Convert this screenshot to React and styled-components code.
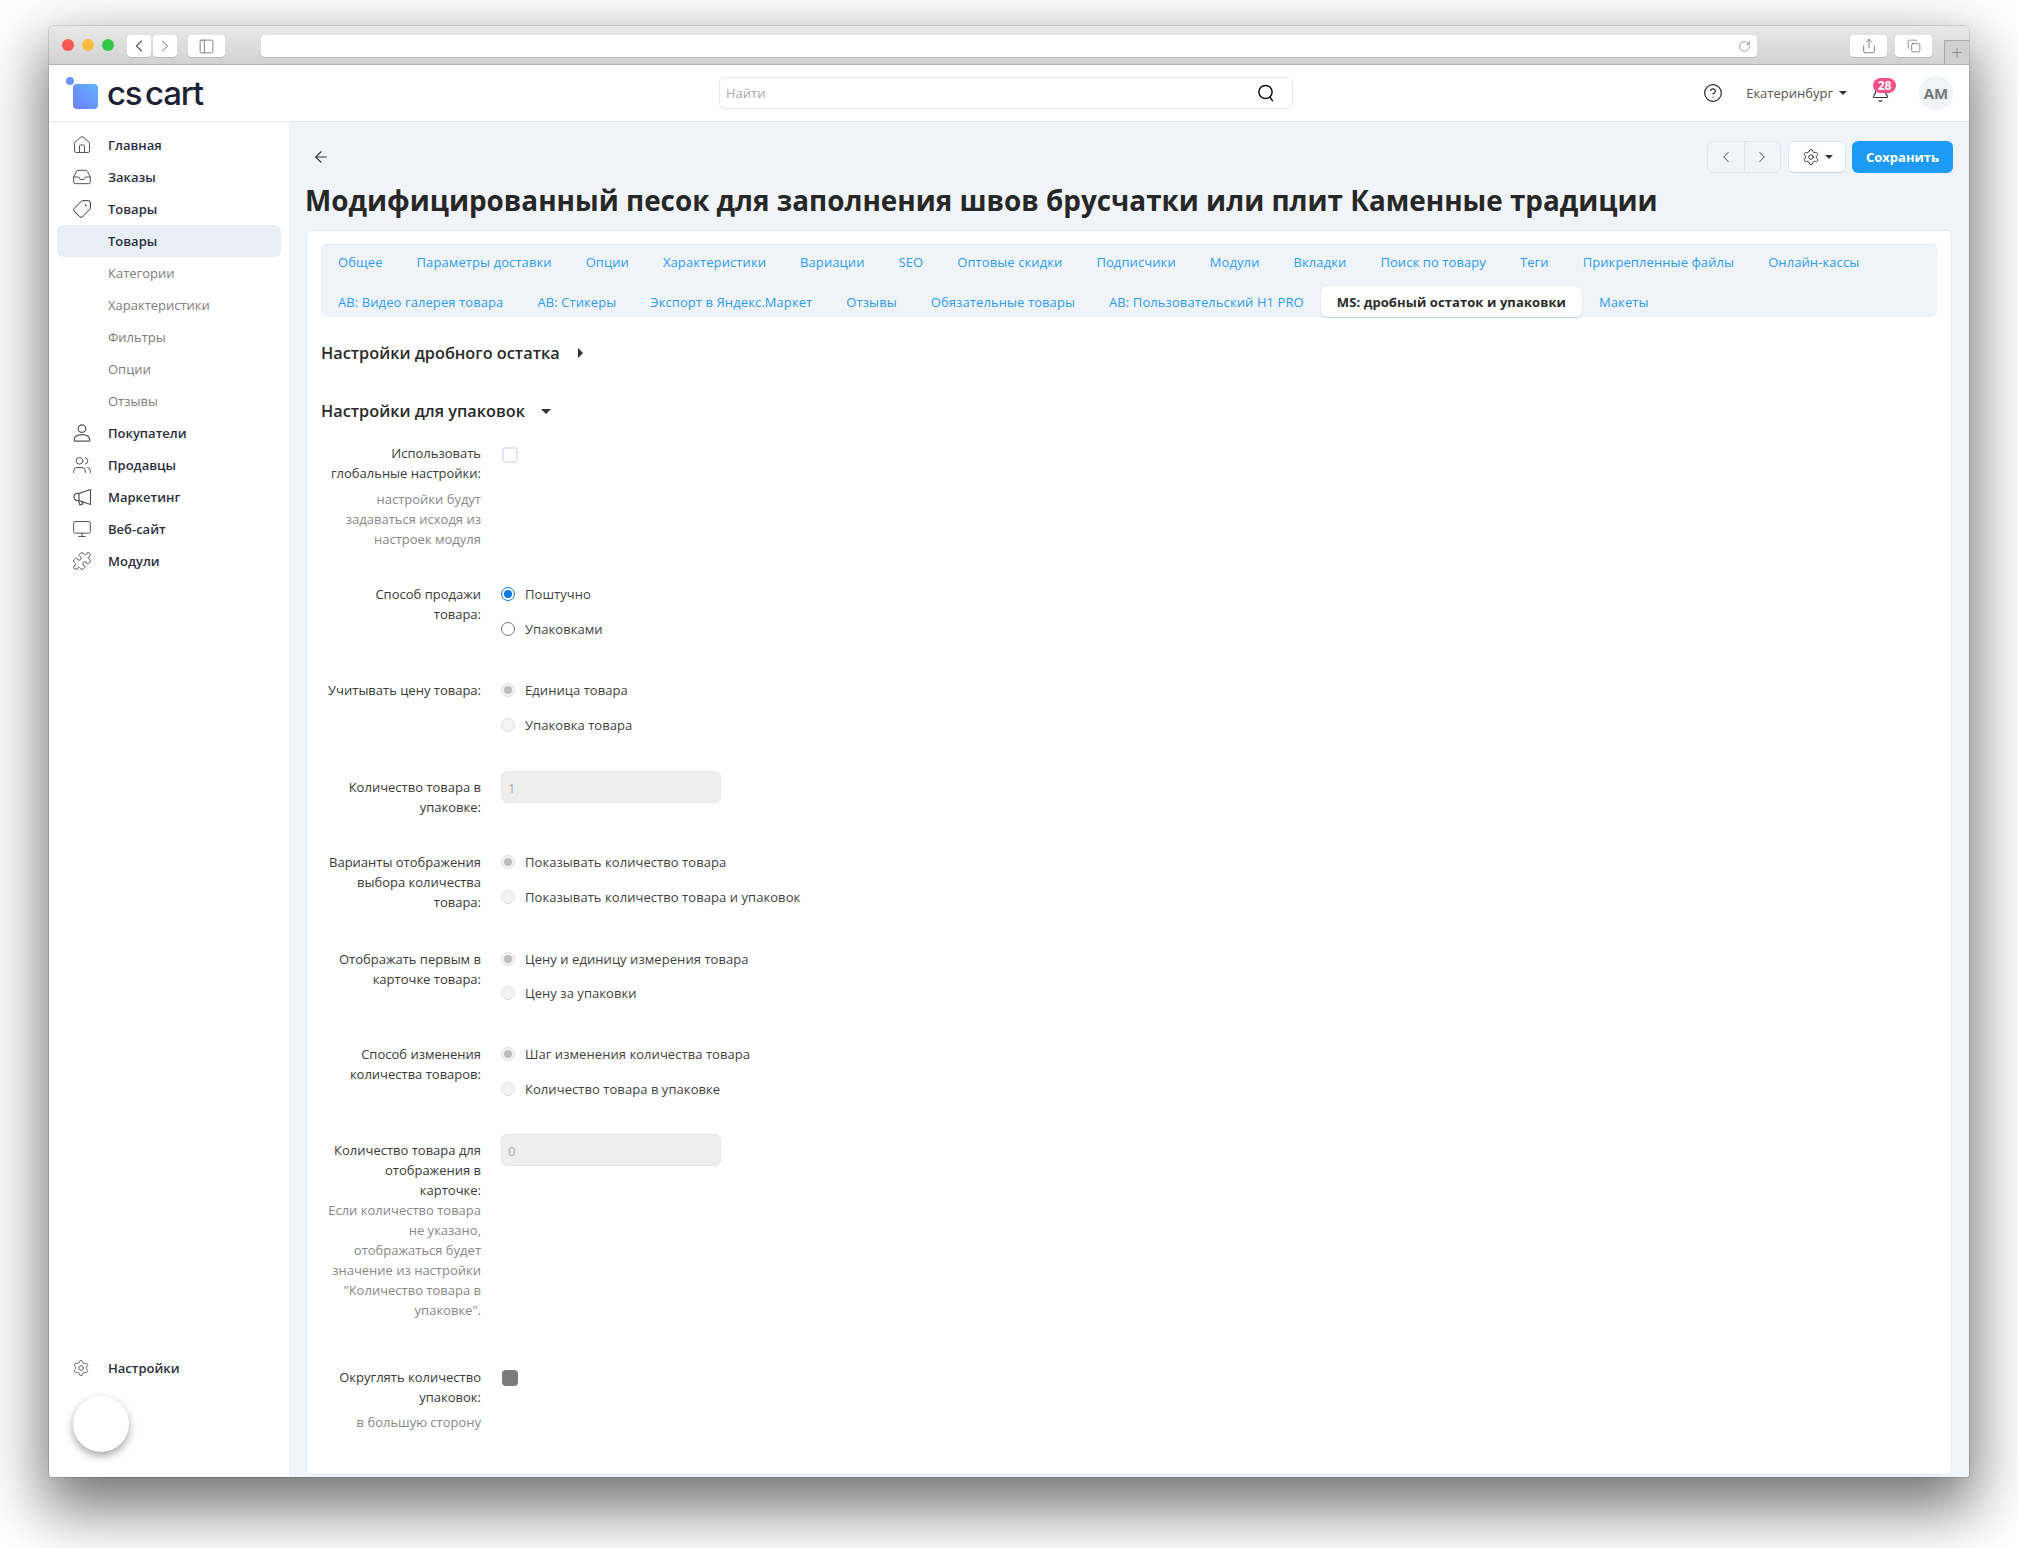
import styled, { createGlobalStyle } from 'styled-components';
import {
  ArrowLeft, Bell, ChevronLeft, ChevronRight, CircleHelp, Copy, Home, Inbox, Monitor,
  PanelLeft, Puzzle, RotateCw, Settings, Share, Tag, Users,
} from 'lucide-react';

const GlobalStyle = createGlobalStyle`
  html, body { margin: 0; padding: 0; background: #fff; }
  body { width: 2018px; height: 1548px; overflow: hidden; font-family: "Open Sans", "Liberation Sans", sans-serif; font-size: 13px; color: #333; }
  * { box-sizing: border-box; }
`;

const Desk = styled.div`padding: 26px 49px 0 49px;`;

const Browser = styled.div`
  width: 1920px; height: 1451px; display: flex; flex-direction: column;
  background: #fff; border-radius: 5px 5px 3px 3px; overflow: hidden;
  box-shadow: 0 26px 60px 6px rgba(0,0,0,.55), 0 0 0 1px rgba(0,0,0,.12);
`;

const TitleBar = styled.div`
  height: 39px; flex: none; display: flex; align-items: flex-start; padding: 9px 0 0 13px;
  background: linear-gradient(#e9e9e9, #d1d1d1); border-bottom: 1px solid #b4b4b4;
  position: relative;
`;

const Light = styled.span`
  width: 12px; height: 12px; border-radius: 50%; background: ${({ $color }) => $color};
  margin: 4px 8px 0 0; flex: none;
`;

const ChromeBtn = styled.div`
  width: ${({ $w }) => $w}px; height: 22px; margin-left: ${({ $ml }) => $ml}px; flex: none;
  background: #fff; border-radius: 4px; box-shadow: 0 1px 0 #bbb;
  display: flex; align-items: center; justify-content: center; color: ${({ $color }) => $color || '#555'};
`;

const UrlBar = styled.div`
  width: 1496px; height: 22px; margin-left: 36px; flex: none; background: #fff; border-radius: 4px;
  box-shadow: 0 1px 0 #bbb; display: flex; align-items: center; justify-content: flex-end; padding-right: 6px; color: #777;
`;

const NewTab = styled.div`
  position: absolute; right: 0; bottom: 0; width: 25px; height: 24px;
  border: 1px solid #aaa; border-right: 0; border-bottom: 0; display: flex; align-items: center; justify-content: center;
  background: #cfcfcf; color: #8a8a8a; font-size: 20px; font-weight: 300; line-height: 1;
`;

const Header = styled.header`
  height: 57px; flex: none; display: flex; align-items: center; border-bottom: 1px solid #e3e8f1; background: #fff;
  padding: 0 16px 0 14px;
`;

const Logo = styled.div`
  width: 656px; flex: none; display: flex; align-items: center; height: 100%;
`;

const LogoMark = styled.div`
  position: relative; width: 25px; height: 25px; margin: 6px 0 0 10px; border-radius: 4px;
  background: linear-gradient(45deg, #6f7dff, #5fb4f7);
  &::before {
    content: ''; position: absolute; left: -7px; top: -7px; width: 8px; height: 8px; border-radius: 50%; background: #6f93ff;
  }
`;

const LogoText = styled.div`
  margin: 0 0 0 9px; font-family: Inter, sans-serif; font-size: 33px; font-weight: 500; color: #1c2135;
  letter-spacing: -1.2px; word-spacing: -4px; line-height: 1;
`;

const SearchBox = styled.div`
  width: 574px; height: 32px; display: flex; align-items: center; justify-content: space-between;
  border: 1px solid #e2e6f2; border-radius: 6px; padding: 0 17px 0 6px; color: #aaa; flex: none;
`;

const HeaderRight = styled.div`
  margin-left: auto; display: flex; align-items: center; color: #555;
`;

const City = styled.div`
  margin-left: 23px; display: flex; align-items: center; gap: 6px; color: #555; font-size: 13px;
`;

const Caret = styled.span`
  width: 0; height: 0; border-left: 4px solid transparent; border-right: 4px solid transparent;
  border-top: 4px solid ${({ $color }) => $color || '#333'};
`;

const BellWrap = styled.div`
  position: relative; margin-left: 21px; width: 24px; height: 24px; color: #333; display: flex; align-items: center; justify-content: center;
`;

const Badge = styled.span`
  position: absolute; top: -3px; left: 5px; width: 23px; height: 15px; border-radius: 8px; background: #f5508a;
  color: #fff; font-size: 12px; font-weight: 700; line-height: 15px; text-align: center;
`;

const Avatar = styled.div`
  width: 34px; height: 34px; margin-left: 27px; border-radius: 50%; background: #f0f3f8; color: #777;
  font-size: 15px; font-weight: 700; display: flex; align-items: center; justify-content: center;
`;

const Body = styled.div`flex: 1; display: flex; min-height: 0;`;

const Sidebar = styled.aside`
  width: 240px; flex: none; display: flex; flex-direction: column; padding: 7px 8px 25px; background: #fff;
`;

const NavItem = styled.div`
  height: 32px; flex: none; display: flex; align-items: center; padding-left: 15px; border-radius: 6px;
  font-weight: ${({ $sub, $active }) => ($sub && !$active ? 400 : 600)};
  color: ${({ $sub, $active }) => ($sub && !$active ? '#7d7d7d' : '#2a2f3d')};
  background: ${({ $active }) => ($active ? '#e9eff7' : 'transparent')};
  margin-top: ${({ $push }) => ($push ? 'auto' : '0')};
`;

const NavIcon = styled.span`
  width: 36px; flex: none; display: flex; align-items: center; color: #555;
`;

const Fab = styled.div`
  width: 56px; height: 56px; margin: 12px 0 0 16px; border-radius: 50%; background: #fff; flex: none;
  box-shadow: 0 4px 8px rgba(0,0,0,.35);
`;

const Main = styled.main`
  flex: 1; min-width: 0; background: #f0f3f8; padding: 19px 17px 2px; display: flex; flex-direction: column;
`;

const ActionRow = styled.div`
  height: 32px; display: flex; align-items: center; flex: none; margin-right: -1px;
`;

const BackBtn = styled.div`
  width: 30px; margin-left: 6px; color: #333; display: flex; align-items: center;
`;

const Pager = styled.div`
  margin-left: auto; display: flex; width: 74px; height: 32px; border: 1px solid #dde5f0; border-radius: 6px; color: #666;
`;

const PagerBtn = styled.div`
  flex: 1; display: flex; align-items: center; justify-content: center;
  & + & { border-left: 1px solid #dde5f0; }
`;

const GearBtn = styled.div`
  width: 58px; height: 32px; margin-left: 7px; background: #fff; border: 1px solid #dde5f0; border-bottom-color: #c9d6ea; border-radius: 6px;
  display: flex; align-items: center; justify-content: center; gap: 5px; color: #333;
`;

const SaveBtn = styled.div`
  width: 101px; height: 32px; margin-left: 6px; border-radius: 6px; background: #1e9bf7; color: #fff; font-weight: 700;
  display: flex; align-items: center; justify-content: center;
`;

const Title = styled.h1`
  margin: 8px 0 11px -1px; font-size: 27.85px; line-height: 38px; font-weight: 700; color: #272727; white-space: nowrap;
`;

const Card = styled.section`
  flex: 1; min-height: 0; background: #fff; border: 1px solid #e5eaf3; border-radius: 6px; padding: 14px 14px 0;
`;

const TabBox = styled.nav`
  display: flex; flex-wrap: wrap; row-gap: 9px; height: 72px; padding: 1px 0 0; background: #f0f3f8; border-radius: 6px;
  box-shadow: 0 -1px 1px #e3e6ec;
`;

const TabItem = styled.div`
  height: 31px; display: flex; align-items: center; padding: 0 ${({ $active }) => ($active ? 16 : 17)}px; white-space: nowrap; border-radius: 6px;
  letter-spacing: 0.09px;
  color: ${({ $active }) => ($active ? '#2b2b2b' : '#2d9cf5')};
  font-weight: ${({ $active }) => ($active ? 700 : 400)};
  background: ${({ $active }) => ($active ? '#fff' : 'transparent')};
  box-shadow: ${({ $active }) => ($active ? '0 1px 1px #bccbe6, 0 0 1px #cdd6e8' : 'none')};
`;

const SectionHead = styled.h3`
  margin: ${({ $top }) => $top}px 0 0; height: 24px; display: flex; align-items: center; gap: ${({ $gap }) => $gap}px;
  font-size: 16.3px; font-weight: 600; color: #2a2a2a;
`;

const CaretRight = styled.span`
  width: 0; height: 0; border-top: 5px solid transparent; border-bottom: 5px solid transparent; border-left: 5px solid #333;
`;

const CaretDown = styled.span`
  width: 0; height: 0; border-left: 5px solid transparent; border-right: 5px solid transparent; border-top: 5px solid #333;
`;

const Form = styled.div`margin-top: 20px;`;

const Row = styled.div`
  display: grid; grid-template-columns: 160px 1fr; column-gap: 20px; margin-bottom: ${({ $after }) => $after}px;
`;

const LabelCol = styled.div`text-align: right; padding-left: 5px;`;

const Label = styled.div`line-height: 20px; color: #3a3a3a;`;

const Hint = styled.div`
  line-height: 20px; color: #888; margin-top: ${({ $mt }) => $mt || 0}px;
`;

const RadioRow = styled.div`
  display: flex; align-items: center; height: 20px; margin-bottom: ${({ $mb }) => $mb}px; color: #3f3f3f; letter-spacing: 0.06px;
`;

const RadioDot = styled.span`
  width: 14px; height: 14px; border-radius: 50%; margin-right: 10px; flex: none; position: relative;
  border: 1px solid ${({ $on, $off }) => ($off ? '#dedede' : $on ? '#0a7bdf' : '#777')};
  background: ${({ $off }) => ($off ? '#f3f3f3' : '#fff')};
  &::after {
    content: ''; display: ${({ $on }) => ($on ? 'block' : 'none')}; position: absolute; left: 2px; top: 2px; width: 8px; height: 8px; border-radius: 50%;
    background: ${({ $off }) => ($off ? '#bdbdbd' : '#0a7bdf')};
  }
`;

const Check = styled.span`
  display: block; width: 16px; height: 16px; margin: ${({ $mt }) => $mt}px 0 0 1px; border-radius: 4px;
  border: 2px solid ${({ $filled }) => ($filled ? '#7b7b7b' : '#e1e6f0')};
  background: ${({ $filled }) => ($filled ? '#7b7b7b' : '#fff')};
`;

const Disabled = styled.div`
  width: 220px; height: 32px; margin-top: -6px; background: #eeeeee; border: 1px solid #e1e6f0; border-radius: 6px;
  padding: 0 6px; line-height: 32px; color: #aaa;
`;

const tabs = [
  'Общее', 'Параметры доставки', 'Опции', 'Характеристики', 'Вариации', 'SEO', 'Оптовые скидки', 'Подписчики',
  'Модули', 'Вкладки', 'Поиск по товару', 'Теги', 'Прикрепленные файлы', 'Онлайн-кассы', 'AB: Видео галерея товара',
  'AB: Стикеры', 'Экспорт в Яндекс.Маркет', 'Отзывы', 'Обязательные товары', 'AB: Пользовательский H1 PRO',
  'MS: дробный остаток и упаковки', 'Макеты',
];

function UserIcon() {
  return (
    <svg width="20" height="20" viewBox="0 0 20 20" fill="none" stroke="currentColor" strokeWidth="1.2">
      <circle cx="10" cy="5.6" r="3.8" />
      <path d="M2.2 17.2c0-3.6 3-5.6 7.8-5.6s7.8 2 7.8 5.6c0 .7-.4 1-1 1H3.2c-.6 0-1-.3-1-1z" />
    </svg>
  );
}

function HornIcon() {
  return (
    <svg width="20" height="20" viewBox="0 0 20 20" fill="none" stroke="currentColor" strokeWidth="1.2" strokeLinejoin="round">
      <path d="M18.5 2.5v15L7 13.6H5.6a3.6 3.6 0 0 1 0-7.2H7z" />
      <path d="M7 6.4v7.2M6.6 13.7l1.2 4.1 3.1-.9-1-2.2" />
    </svg>
  );
}

function TagIcon(props) {
  return <Tag {...props} style={{ transform: 'rotate(90deg)' }} color="#333" />;
}

const nav = [
  { label: 'Главная', icon: Home },
  { label: 'Заказы', icon: Inbox },
  { label: 'Товары', icon: TagIcon },
  { label: 'Товары', sub: true, active: true },
  { label: 'Категории', sub: true },
  { label: 'Характеристики', sub: true },
  { label: 'Фильтры', sub: true },
  { label: 'Опции', sub: true },
  { label: 'Отзывы', sub: true },
  { label: 'Покупатели', icon: UserIcon },
  { label: 'Продавцы', icon: Users },
  { label: 'Маркетинг', icon: HornIcon },
  { label: 'Веб-сайт', icon: Monitor },
  { label: 'Модули', icon: Puzzle },
];

function Radios({ items, pitch = 15 }) {
  return (
    <div>
      {items.map((it, i) => (
        <RadioRow key={it.text} $mb={i === items.length - 1 ? 6 : pitch}>
          <RadioDot $on={it.on} $off={it.off} />
          {it.text}
        </RadioRow>
      ))}
    </div>
  );
}

function SearchGlyph() {
  return (
    <svg width="18" height="18" viewBox="0 0 18 18" fill="none" stroke="#111" strokeWidth="1.5">
      <circle cx="8.5" cy="8" r="6.6" />
      <path d="M12.8 13l2.6 3.6" strokeLinecap="round" />
    </svg>
  );
}

export default function App() {
  return (
    <Desk>
      <GlobalStyle />
      <Browser>
        <TitleBar>
          <Light $color="#fc5753" />
          <Light $color="#fdbc40" />
          <Light $color="#33c748" />
          <ChromeBtn $w={24} $ml={5}><ChevronLeft size={20} strokeWidth={1.3} /></ChromeBtn>
          <ChromeBtn $w={24} $ml={2} $color="#aaa"><ChevronRight size={20} strokeWidth={1.3} /></ChromeBtn>
          <ChromeBtn $w={37} $ml={11}><PanelLeft size={17} strokeWidth={1} /></ChromeBtn>
          <UrlBar><RotateCw size={13} strokeWidth={1.3} /></UrlBar>
          <ChromeBtn $w={37} $ml={93}><Share size={16} strokeWidth={1.1} /></ChromeBtn>
          <ChromeBtn $w={37} $ml={8}><Copy size={14} strokeWidth={1.1} /></ChromeBtn>
          <NewTab>+</NewTab>
        </TitleBar>
        <Header>
          <Logo>
            <LogoMark />
            <LogoText>cs cart</LogoText>
          </Logo>
          <SearchBox>
            Найти
            <SearchGlyph />
          </SearchBox>
          <HeaderRight>
            <CircleHelp size={20} strokeWidth={1.4} color="#222" />
            <City>Екатеринбург <Caret /></City>
            <BellWrap>
              <Bell size={19} strokeWidth={1.4} />
              <Badge>28</Badge>
            </BellWrap>
            <Avatar>АМ</Avatar>
          </HeaderRight>
        </Header>
        <Body>
          <Sidebar>
            {nav.map((n, i) => (
              <NavItem key={n.label + i} $sub={n.sub} $active={n.active}>
                <NavIcon>
                  {n.icon && <n.icon size={20} strokeWidth={1.2} />}
                </NavIcon>
                {n.label}
              </NavItem>
            ))}
            <NavItem $push>
              <NavIcon><Settings size={18} strokeWidth={1.2} /></NavIcon>
              Настройки
            </NavItem>
            <Fab />
          </Sidebar>
          <Main>
            <ActionRow>
              <BackBtn><ArrowLeft size={18} strokeWidth={1.5} /></BackBtn>
              <Pager>
                <PagerBtn><ChevronLeft size={18} strokeWidth={1.4} /></PagerBtn>
                <PagerBtn><ChevronRight size={18} strokeWidth={1.4} /></PagerBtn>
              </Pager>
              <GearBtn><Settings size={18} strokeWidth={1.3} /><Caret /></GearBtn>
              <SaveBtn>Сохранить</SaveBtn>
            </ActionRow>
            <Title>Модифицированный песок для заполнения швов брусчатки или плит Каменные традиции</Title>
            <Card>
              <TabBox>
                {tabs.map(t => (
                  <TabItem key={t} $active={t.startsWith('MS:')}>{t}</TabItem>
                ))}
              </TabBox>
              <SectionHead $top={24} $gap={18}>Настройки дробного остатка <CaretRight /></SectionHead>
              <SectionHead $top={34} $gap={16}>Настройки для упаковок <CaretDown /></SectionHead>
              <Form>
                <Row $after={35}>
                  <LabelCol>
                    <Label>Использовать глобальные настройки:</Label>
                    <Hint $mt={6}>настройки будут задаваться исходя из настроек модуля</Hint>
                  </LabelCol>
                  <div><Check $mt={4} /></div>
                </Row>
                <Row $after={35}>
                  <LabelCol><Label>Способ продажи товара:</Label></LabelCol>
                  <Radios items={[{ text: 'Поштучно', on: true }, { text: 'Упаковками' }]} />
                </Row>
                <Row $after={36}>
                  <LabelCol><Label>Учитывать цену товара:</Label></LabelCol>
                  <Radios items={[{ text: 'Единица товара', on: true, off: true }, { text: 'Упаковка товара', off: true }]} />
                </Row>
                <Row $after={35}>
                  <LabelCol><Label>Количество товара в упаковке:</Label></LabelCol>
                  <div><Disabled>1</Disabled></div>
                </Row>
                <Row $after={36}>
                  <LabelCol><Label>Варианты отображения выбора количества товара:</Label></LabelCol>
                  <Radios items={[{ text: 'Показывать количество товара', on: true, off: true }, { text: 'Показывать количество товара и упаковок', off: true }]} />
                </Row>
                <Row $after={35}>
                  <LabelCol><Label>Отображать первым в карточке товара:</Label></LabelCol>
                  <Radios pitch={14} items={[{ text: 'Цену и единицу измерения товара', on: true, off: true }, { text: 'Цену за упаковки', off: true }]} />
                </Row>
                <Row $after={35}>
                  <LabelCol><Label>Способ изменения количества товаров:</Label></LabelCol>
                  <Radios items={[{ text: 'Шаг изменения количества товара', on: true, off: true }, { text: 'Количество товара в упаковке', off: true }]} />
                </Row>
                <Row $after={47}>
                  <LabelCol>
                    <Label>Количество товара для отображения в карточке:</Label>
                    <Hint>Если количество товара не указано, отображаться будет значение из настройки "Количество товара в упаковке".</Hint>
                  </LabelCol>
                  <div><Disabled>0</Disabled></div>
                </Row>
                <Row $after={0}>
                  <LabelCol>
                    <Label>Округлять количество упаковок:</Label>
                    <Hint $mt={5}>в большую сторону</Hint>
                  </LabelCol>
                  <div><Check $mt={3} $filled /></div>
                </Row>
              </Form>
            </Card>
          </Main>
        </Body>
      </Browser>
    </Desk>
  );
}
